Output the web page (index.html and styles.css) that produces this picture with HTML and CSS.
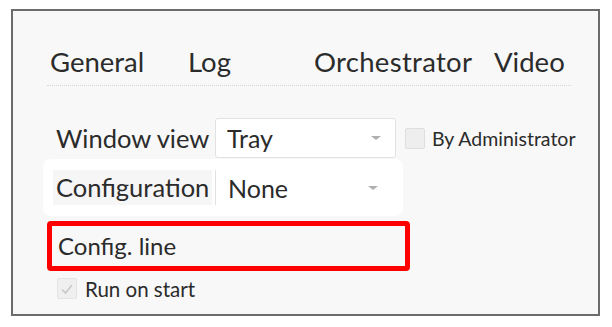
FILE: index.html
```html
<!DOCTYPE html>
<html lang="en">
<head>
    <meta charset="UTF-8" />
    <title>Settings</title>
    <link rel="stylesheet" href="styles.css">
</head>
<body>
    <div class="frame">
        <!-- Tabs -->
        <div class="tabs">
            <span class="tab tab-general">General</span>
            <span class="tab tab-log">Log</span>
            <span class="tab tab-orch">Orchestrator</span>
            <span class="tab">Video</span>
        </div>

        <!-- Window view -->
        <div class="row row-view">
            <span class="row-label">Window view</span>
            <div class="select">
                <span>Tray</span>
                <span class="arrow"></span>
            </div>
            <span class="checkbox"></span>
            <span class="small-label">By Administrator</span>
        </div>

        <!-- Configuration -->
        <div class="panel">
            <span class="panel-label">Configuration</span>
            <div class="select select-flat">
                <span>None</span>
                <span class="arrow"></span>
            </div>
        </div>

        <!-- Config line -->
        <div class="config-line">Config. line</div>

        <!-- Run on start -->
        <div class="run-row">
            <span class="checkbox checked">
                <svg width="14" height="12" viewBox="0 0 14 12"><path d="M2 6.5 L5.5 10 L12 2" fill="none" stroke="#c8c8c8" stroke-width="1.6"/></svg>
            </span>
            <span class="small-label">Run on start</span>
        </div>
    </div>
</body>
</html>
```

FILE: styles.css
```css
body {
    margin: 0;
    padding: 0;
    background: #ffffff;
    font-family: 'Lato', sans-serif;
    color: #2b2b2b;
}

.frame {
    margin: 9px 0 0 11px;
    width: 585px;
    height: 303px;
    border: 2px solid #6c6c6c;
    background-color: #f8f8f8;
}

.tabs {
    display: flex;
    margin: 29px 0 0 34px;
    width: 524px;
    height: 46px;
    line-height: 44px;
    font-size: 27.5px;
    padding-left: 3px;
    box-sizing: border-box;
    border-bottom: 1px dotted #d6d6d6;
}

.tab-general { width: 138px; }
.tab-log { width: 126px; }
.tab-orch { width: 180px; letter-spacing: 0.3px; }

.row {
    display: flex;
    align-items: center;
}

.row-view {
    margin: 32px 0 0 43px;
    height: 40px;
}

.row-label {
    width: 159px;
    font-size: 25.5px;
}

.select {
    display: flex;
    align-items: center;
    justify-content: space-between;
    box-sizing: border-box;
    width: 181px;
    height: 40px;
    padding: 0 14px 0 11px;
    background-color: #ffffff;
    border: 1px solid #e2e2e2;
    border-radius: 3px;
    font-size: 25px;
}

.arrow {
    width: 0;
    height: 0;
    border-left: 5px solid transparent;
    border-right: 5px solid transparent;
    border-top: 4px solid #b0b0b0;
}

.checkbox {
    display: inline-flex;
    align-items: center;
    justify-content: center;
    box-sizing: border-box;
    width: 20px;
    height: 21px;
    margin-left: 9px;
    background-color: #eeeeee;
    border: 1px solid #dedede;
    border-radius: 2px;
}

.small-label {
    margin-left: 7px;
    font-size: 19.5px;
}

.panel {
    display: flex;
    align-items: center;
    box-sizing: border-box;
    margin: 1px 0 0 30px;
    width: 360px;
    height: 57px;
    padding-left: 10px;
    background-color: #ffffff;
    border-radius: 8px;
}

.panel-label {
    width: 159px;
    height: 35px;
    line-height: 35px;
    padding-left: 3px;
    box-sizing: border-box;
    background-color: #f6f6f6;
    font-size: 25.5px;
}

.select-flat {
    width: 178px;
    height: 35px;
    margin-left: 3px;
    border: none;
    border-left: 1px solid #e2e2e2;
    border-radius: 0;
    padding-left: 12px;
    padding-right: 15px;
}

.config-line {
    box-sizing: border-box;
    margin: 5px 0 0 34px;
    width: 363px;
    height: 50px;
    padding-left: 6px;
    line-height: 40px;
    border: 5px solid #ff0000;
    border-radius: 4px;
    font-size: 24px;
}

.run-row {
    display: flex;
    align-items: center;
    margin: 7px 0 0 35px;
    height: 21px;
}

.run-row .checkbox {
    background-color: #efefef;
    border-color: #e4e4e4;
}

.run-row .small-label {
    margin-left: 8px;
    font-size: 20.5px;
}
```
